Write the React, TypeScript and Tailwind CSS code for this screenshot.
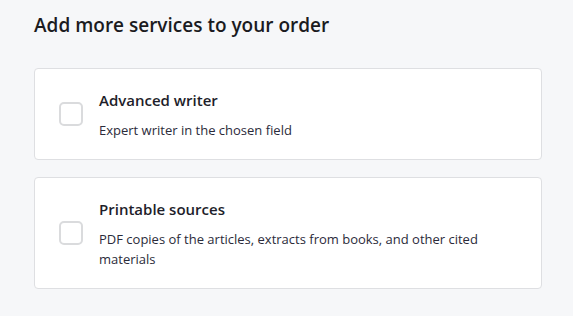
import React from "react";

const items = [
  { title: "Advanced writer", desc: "Expert writer in the chosen field" },
  {
    title: "Printable sources",
    desc: "PDF copies of the articles, extracts from books, and other cited materials",
  },
];

export default function App() {
  return (
    <div
      className="w-[573px] h-[316px] bg-[#f6f7f9] pl-[34px] pr-[31px] pt-[11px]"
      style={{ fontFamily: '"Open Sans", "Noto Sans", sans-serif' }}
    >
      <h2 className="text-[19px] leading-[28px] font-semibold text-[#1b1b1f]">
        Add more services to your order
      </h2>
      <div className="mt-[29px] flex flex-col gap-[17px]">
        {items.map((it) => (
          <div
            key={it.title}
            className="flex items-center bg-white border border-[#dedfe2] rounded-[4px] py-[19px] pl-[24px] pr-[24px]"
          >
            <div className="w-[24px] h-[24px] shrink-0 rounded-[5px] border-2 border-[#dadbdd] bg-white" />
            <div className="ml-[16px] flex flex-col">
              <div className="text-[15px] leading-[24px] font-semibold text-[#1e1e2a]">
                {it.title}
              </div>
              <div className="mt-[8px] text-[13px] leading-[20px] text-[#2b2b3a]">
                {it.desc}
              </div>
            </div>
          </div>
        ))}
      </div>
    </div>
  );
}
